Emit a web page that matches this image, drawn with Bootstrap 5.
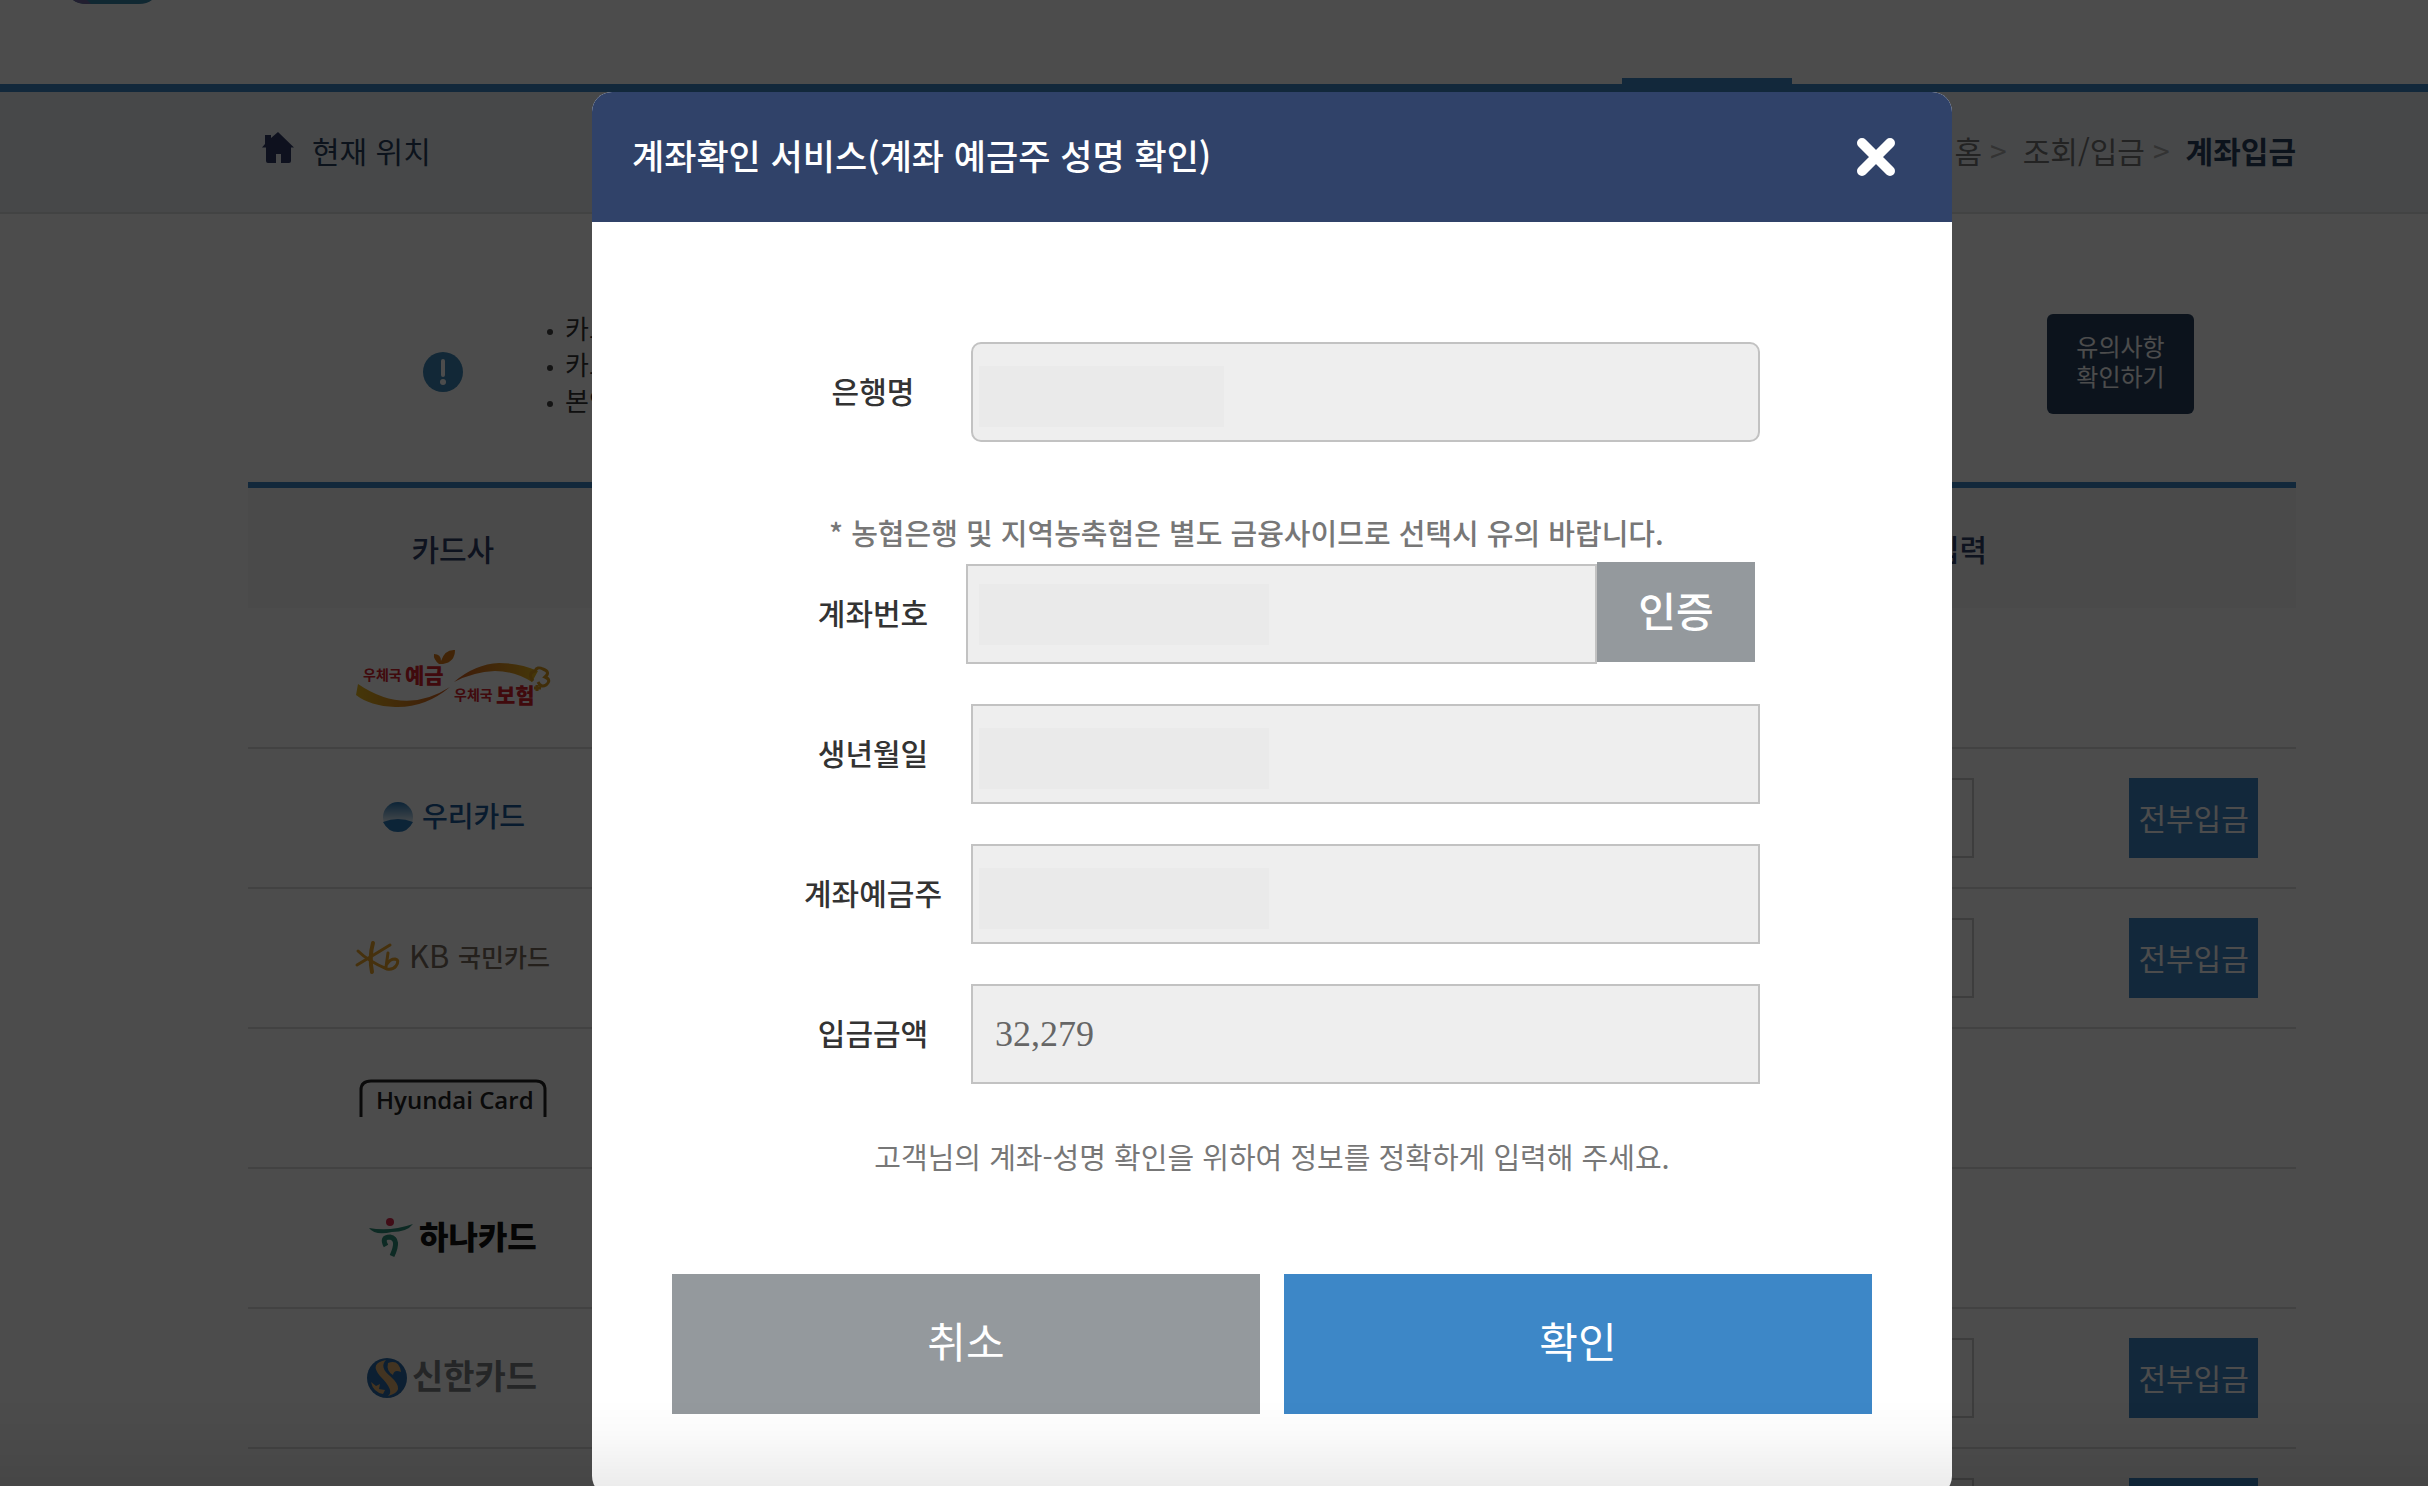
<!DOCTYPE html>
<html lang="ko">
<head>
<meta charset="utf-8">
<meta name="viewport" content="width=device-width, initial-scale=1">
<title>계좌입금</title>
<link href="https://cdn.jsdelivr.net/npm/bootstrap@5.3.0/dist/css/bootstrap.min.css" rel="stylesheet">
<style>
:root{--page-l:248px;--page-r:132px;--blue:#3d87c7;--navy:#304269}
body{font-family:"Noto Sans CJK KR",sans-serif;font-size:30px;line-height:40px;color:#333;background:#fff;height:100vh;overflow:hidden}
.page-pad{padding-left:var(--page-l);padding-right:var(--page-r)}
.site-head{height:92px;border-bottom:8px solid var(--blue)}
.head-logo{width:79px;height:4px;margin-left:73px}
.active-tab{height:6px;width:170px;margin-right:636px;background:var(--blue)}
.loc-bar{height:122px;padding-bottom:4px;background:#edf2f6;border-bottom:2px solid #dcdfe2}
.loc-bar,.loc-bar a{color:#29415e}
.here-now{padding-left:14px;gap:18px}
.here-now svg{margin-bottom:4px}
.crumbs a{color:#777;text-decoration:none}
.crumbs a.here{color:#29415e;font-weight:700}
.crumbs .sep{color:#aaa}
.notice{padding:96px 102px 64px 175px}
.notice ul{font-size:26px;line-height:36px;padding-left:84px;list-style:none}
.notice li::before{content:"";display:inline-block;width:6px;height:6px;border-radius:50%;background:#444;margin-right:12px;vertical-align:middle}
.btn-caution{width:147px;height:100px;background:#284260;color:#fff;font-size:24px;line-height:30px;border:0;border-radius:6px;padding:0 0 6px}
.pay-table{border-top:6px solid var(--blue);table-layout:fixed}
.pay-table>:not(caption)>*>*{padding:0;border-bottom:2px solid #dedede;background:transparent;vertical-align:middle;text-align:center}
.pay-table thead th{height:123px;background:#f7f7f7;border-bottom:0;color:#304068;font-weight:500}
.pay-table tbody td{height:140px}
.pay-table svg{display:block;margin:0 auto;overflow:visible}
.amt{width:176px;height:80px;border:2px solid #ccc;border-radius:0;margin:0 auto}
.btn-all{width:129px;height:80px;background:var(--blue);color:#fff;border:0;font-size:30px;line-height:40px;border-radius:0;padding:0 0 2px}
.dim{z-index:10;background:rgba(0,0,0,.7);padding-top:92px}
.dlg{width:1360px;max-width:100%;min-height:1404px;border-radius:20px;background:#fff;overflow:hidden}
.dlg-head{height:130px;background:var(--navy);color:#fff;padding:0 56px 0 40px}
.dlg-head h1{font-size:35px;line-height:48px;font-weight:500;margin:0;padding-bottom:4px}
.x-btn{border:0;background:none;padding:0;line-height:0}
.dlg-body{padding:120px 192px 0 204px}
.f-row{height:100px;margin-bottom:40px}
.f-label{width:154px;text-align:center;font-weight:500;color:#333;flex:none;padding-bottom:4px}
.f-in{height:100px;border:2px solid #c2c2c2;border-radius:0;background:#eee;padding:0 22px;font-size:30px;color:#666;min-width:0;margin-left:21px}
.f-in:focus{box-shadow:none;background-color:#eee}
.f-in.amount{font-family:"Liberation Serif",serif;font-size:36px}
.f-in.masked{background:#eee linear-gradient(#eaeaea,#eaeaea) 6px 22px/290px 61px no-repeat}
.f-in.bank{border-radius:10px;background-size:245px 61px}
.acct-group{margin:0 5px 0 16px}
.acct-group .f-in{margin:0}
.acct-group .f-in.masked{background-position:11px 18px}
.btn-cert{width:158px;height:100px;flex:none;background:#94999d;color:#fff;border:0;border-radius:0;font-size:41px;line-height:56px;font-weight:500;padding:0 0 6px;margin-top:-2px}
.bank-note{font-size:29px;font-weight:500;color:#777;margin:70px 0 12px 33px}
.guide{font-size:29px;color:#777;text-align:center;margin:52px 0 98px}
.dlg-foot{padding:0 80px;gap:24px}
.btn-big{flex:1 1 0;height:140px;border:0;border-radius:0;color:#fff;font-size:42px;line-height:56px;padding:0 0 8px}
.btn-big.no{background:#94999d}.btn-big.yes{background:var(--blue)}
.fade-foot{z-index:20;left:0;right:0;bottom:0;height:86px;pointer-events:none;background:linear-gradient(rgba(0,0,0,0),rgba(0,0,0,.02) 40%,rgba(0,0,0,.075))}
svg text{font-family:"Noto Sans CJK KR",sans-serif}
svg text.latin{font-family:"Open Sans",sans-serif}
</style>
<script src="https://cdn.jsdelivr.net/npm/bootstrap@5.3.0/dist/js/bootstrap.bundle.min.js"></script>
</head>
<body>
<header class="site-head d-flex flex-column justify-content-between">
  <svg class="head-logo" viewBox="0 0 79 4"><path d="M0 0H79Q74 4 66 4H14Q5 4 0 0Z" fill="#3686a8"/><path d="M0 0H14L18 4H14Q5 4 0 0Z" fill="#7468a0"/></svg>
  <div class="active-tab align-self-end"></div>
</header>
<nav class="loc-bar page-pad d-flex justify-content-between align-items-center">
  <div class="here-now d-flex align-items-center">
    <svg width="32" height="32" viewBox="0 0 32 32" fill="#303a66"><path d="M16 0 32 15.500H29V29Q29 31 27 31H19V22H14V31H6Q4 31 4 29V15.500H0L3 12V3H9V6Z"/></svg>
    <span>현재 위치</span>
  </div>
  <div class="crumbs d-flex gap-2"><a href="#">홈</a><span class="sep">&gt;</span><a href="#" class="ms-2">조회/입금</a><span class="sep">&gt;</span><a href="#" class="here ms-2">계좌입금</a></div>
</nav>
<main class="page-pad">
  <section class="notice d-flex align-items-center">
    <svg class="mt-3" width="40" height="40" viewBox="0 0 40 40"><circle cx="20" cy="20" r="20" fill="#3d87b7"/><path d="M20 9V23" stroke="#fff" stroke-width="4" stroke-linecap="round"/><circle cx="20" cy="30" r="3" fill="#fff"/></svg>
    <ul class="mb-0 flex-grow-1"><li>카드대금 입금 안내</li><li>카드사별 입금 안내</li><li>본인 계좌만 가능</li></ul>
    <button class="btn btn-caution">유의사항<br>확인하기</button>
  </section>
  <table class="table pay-table mb-0">
    <colgroup><col style="width:20%"><col style="width:50%"><col style="width:20%"><col style="width:10%"></colgroup>
    <thead><tr><th scope="col">카드사</th><th></th><th scope="col">입금할금액 입력</th><th></th></tr></thead>
    <tbody>
      <tr><td><svg width="196" height="60" viewBox="0 0 196 60"><defs><linearGradient id="g1"><stop stop-color="#e8b820"/><stop offset="1" stop-color="#d05a20"/></linearGradient><linearGradient id="g2"><stop stop-color="#d05a20"/><stop offset="1" stop-color="#e8b820"/></linearGradient></defs><path d="M3 36Q50 68 95 39Q70 60 40 59Q15 58 1 47Z" fill="url(#g1)"/><path d="M99 34Q120 16 144 15Q165 15 183 23L177 34Q160 23 140 23Q118 24 99 34Z" fill="url(#g2)"/><path d="M84 16Q78 11 79 6Q86 6 86 13Q90 1 100 2Q100 14 88 16Z" fill="#d97a18"/><path d="M178 33Q172 25 180 23Q182 18 188 21Q196 24 190 29Q197 32 191 37Q186 40 183 34M182 37V43M179 40H186" fill="none" stroke="#d99a20" stroke-width="3"/><text x="8" y="32" font-size="14" font-weight="700" fill="#d8222c">우체국</text><text x="50" y="35" font-size="21" font-weight="900" fill="#d8222c">예금</text><text x="99" y="52" font-size="14" font-weight="700" fill="#d8222c">우체국</text><text x="141" y="55" font-size="21" font-weight="900" fill="#d8222c">보험</text></svg></td><td></td><td></td><td></td></tr>
      <tr><td><svg width="142" height="42" viewBox="0 0 142 42"><defs><linearGradient id="g3" x2="0" y2="1"><stop stop-color="#2a78b8"/><stop offset=".6" stop-color="#cfe4f2"/></linearGradient></defs><circle cx="16" cy="20" r="15" fill="url(#g3)"/><path d="M1 25Q16 19 31 25Q26 35 16 35T1 25Z" fill="#2a78b8"/><text x="40" y="30" font-size="28" font-weight="500" fill="#1c5a9c">우리카드</text></svg></td><td></td><td><input class="form-control amt" aria-label="우리카드 입금금액"></td><td><button class="btn btn-all">전부입금</button></td></tr>
      <tr><td><svg width="198" height="40" viewBox="0 0 198 40"><g fill="none" stroke="#e9a52c" stroke-linecap="round"><path d="M19 5Q15 19 18 34" stroke-width="4"/><path d="M4 13Q14 23 33 31Q39 32 42 28Q46 22 41 21Q36 21 33 26M36 7Q18 18 3 27M34 15L32 29" stroke-width="3"/></g><text x="55" y="30" font-size="31" fill="#7a6c60">KB</text><text x="104" y="29" font-size="25" font-weight="500" fill="#7a6c60">국민카드</text></svg></td><td></td><td><input class="form-control amt" aria-label="국민카드 입금금액"></td><td><button class="btn btn-all">전부입금</button></td></tr>
      <tr><td><svg width="188" height="38" viewBox="0 0 188 38"><path d="M2 38V11Q2 2 12 2H177Q186 2 186 11V38" fill="none" stroke="#222" stroke-width="3"/><text class="latin" x="17" y="30" font-size="24" font-weight="600" fill="#222">Hyundai Card</text></svg></td><td></td><td></td><td></td></tr>
      <tr><td><svg width="170" height="42" viewBox="0 0 170 42"><circle cx="22" cy="5" r="4" fill="#d8284c"/><path d="M1 11Q22 15 45 7Q39 15 24 15Q7 19 1 11Z" fill="#2d8c78"/><path d="M18 29Q13 20 22 20Q32 22 24 39" fill="none" stroke="#2d8c78" stroke-width="5"/><text x="51" y="32" font-size="32" font-weight="900" fill="#111">하나카드</text></svg></td><td></td><td></td><td></td></tr>
      <tr><td><svg width="174" height="42" viewBox="0 0 174 42"><circle cx="21" cy="21" r="20" fill="#286aa8"/><path d="M20 3Q3 6 14 19Q29 34 22 39Q41 34 24 19Q13 10 20 3Z" fill="#e0b070"/><path d="M22 6Q33 2 35 15Q28 12 27 18Q20 14 22 6M5 25Q7 35 17 37L19 33 13 32 14 27 10 29Z" fill="#e0b070"/><text x="46" y="32" font-size="34" font-weight="700" fill="#7c7f84">신한카드</text></svg></td><td></td><td><input class="form-control amt" aria-label="신한카드 입금금액"></td><td><button class="btn btn-all">전부입금</button></td></tr>
      <tr><td></td><td></td><td><input class="form-control amt" aria-label="입금금액"></td><td><button class="btn btn-all">전부입금</button></td></tr>
    </tbody>
  </table>
</main>
<div class="dim position-fixed top-0 start-0 w-100 h-100 page-pad d-flex justify-content-center align-items-start overflow-hidden">
  <div class="dlg" role="dialog" aria-labelledby="dlgTitle">
    <div class="dlg-head d-flex justify-content-between align-items-center">
      <h1 id="dlgTitle">계좌확인 서비스(계좌 예금주 성명 확인)</h1>
      <button class="x-btn" aria-label="닫기"><svg width="40" height="40" viewBox="0 0 40 40"><path d="M6 6 34 34M34 6 6 34" stroke="#fff" stroke-width="10" stroke-linecap="round"/></svg></button>
    </div>
    <form class="dlg-body">
      <div class="f-row d-flex align-items-center mb-0"><label class="f-label" for="bank">은행명</label><input id="bank" class="form-control f-in masked bank" readonly></div>
      <p class="bank-note text-nowrap">* 농협은행 및 지역농축협은 별도 금융사이므로 선택시 유의 바랍니다.</p>
      <div class="f-row d-flex align-items-center"><label class="f-label" for="acct">계좌번호</label><div class="acct-group d-flex flex-grow-1"><input id="acct" class="form-control f-in masked" readonly><button type="button" class="btn btn-cert">인증</button></div></div>
      <div class="f-row d-flex align-items-center"><label class="f-label" for="birth">생년월일</label><input id="birth" class="form-control f-in masked" readonly></div>
      <div class="f-row d-flex align-items-center"><label class="f-label" for="owner">계좌예금주</label><input id="owner" class="form-control f-in masked" readonly></div>
      <div class="f-row d-flex align-items-center mb-0"><label class="f-label" for="amount">입금금액</label><input id="amount" class="form-control f-in amount" value="32,279" readonly></div>
    </form>
    <p class="guide">고객님의 계좌-성명 확인을 위하여 정보를 정확하게 입력해 주세요.</p>
    <div class="dlg-foot d-flex"><button class="btn btn-big no">취소</button><button class="btn btn-big yes">확인</button></div>
  </div>
</div>
<div class="fade-foot position-fixed"></div>
</body>
</html>
